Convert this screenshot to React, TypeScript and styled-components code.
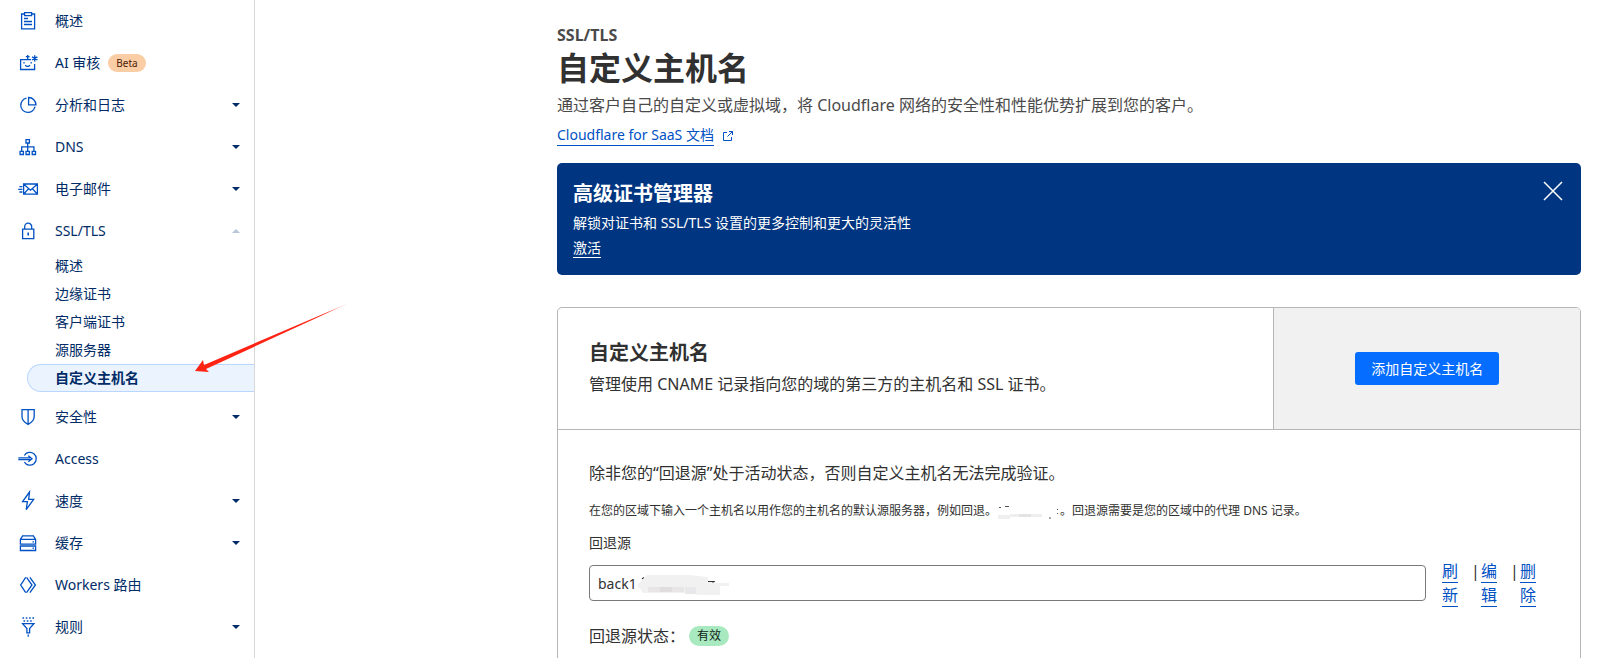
import React from 'react';
import styled, { createGlobalStyle, css } from 'styled-components';

const color = {
  nav: '#002b66',
  link: '#0051c3',
  text: '#313131',
  muted: '#4a4a4a',
  banner: '#003681',
  border: '#b6b6b6',
};

const GlobalStyle = createGlobalStyle`
  *, *::before, *::after { box-sizing: border-box; }
  body {
    margin: 0;
    background: #fff;
    color: ${color.text};
    font-family: "Noto Sans", "Noto Sans CJK SC", sans-serif;
    font-size: 16px;
    line-height: 24px;
  }
  h1, h2, p, ul { margin: 0; padding: 0; }
  ul { list-style: none; }
  button, input { font: inherit; }
`;

const Page = styled.div`
  position: relative;
  display: flex;
  height: 100vh;
  overflow: hidden;
`;

const Sidebar = styled.nav`
  flex: 0 0 255px;
  border-right: 1px solid #d5d7d8;
  font-size: 14px;
  line-height: 20px;
`;

const navRow = css`
  display: flex;
  align-items: center;
  width: 100%;
  height: 42px;
  padding: 0 14px 0 17px;
  border: 0;
  background: none;
  color: ${color.nav};
  text-align: left;
  text-decoration: none;
  cursor: pointer;
`;

const NavLink = styled.a`
  ${navRow}
`;

const NavToggle = styled.button`
  ${navRow}
`;

const NavIcon = styled.svg`
  flex: none;
  width: 22px;
  height: 22px;
  margin-right: 16px;
  fill: none;
  stroke: ${color.link};
  stroke-width: 1.3;
`;

const NavLabel = styled.span`
  flex: 1;
  display: flex;
  align-items: center;
  gap: 8px;
`;

const BetaBadge = styled.span`
  padding: 0 8px;
  border-radius: 9px;
  background: #fbcda5;
  color: #4a1c04;
  font-size: 10px;
  line-height: 18px;
`;

const Caret = styled.span<{ $open?: boolean }>`
  border: 4px solid transparent;
  ${({ $open }) =>
    $open
      ? css`
          border-top-width: 0;
          border-bottom-color: #b9c5d9;
        `
      : css`
          border-bottom-width: 0;
          border-top-color: ${color.nav};
        `}
`;

const SubMenu = styled.ul`
  padding: 0 0 4px 27px;
`;

const SubLink = styled.a<{ $active?: boolean }>`
  display: block;
  padding-left: 27px;
  border: 1px solid transparent;
  border-right: 0;
  border-radius: 14px 0 0 14px;
  color: ${color.nav};
  line-height: 26px;
  text-decoration: none;
  ${({ $active }) =>
    $active &&
    css`
      border-color: #b9d6ff;
      background: #ebf3fe;
      font-weight: 700;
    `}
`;

const Main = styled.main`
  flex: 1;
  min-width: 0;
  padding: 23px 20px 0;
`;

const Content = styled.div`
  max-width: 1024px;
  margin-left: auto;
`;

const Eyebrow = styled.p`
  color: ${color.muted};
  font-weight: 700;
`;

const Title = styled.h1`
  font-size: 32px;
  line-height: 42px;
`;

const Lead = styled.p`
  margin-top: 4px;
  color: ${color.muted};
`;

const DocLine = styled.p`
  display: flex;
  align-items: center;
  gap: 8px;
  margin-top: 8px;
  font-size: 14px;
  line-height: 20px;
`;

const TextLink = styled.a`
  border-bottom: 1px solid currentColor;
  color: ${color.link};
  text-decoration: none;
`;

const LineIcon = styled.svg`
  width: 12px;
  height: 12px;
  fill: none;
  stroke: ${color.link};
`;

const Banner = styled.section`
  display: flex;
  justify-content: space-between;
  align-items: flex-start;
  margin-top: 17px;
  padding: 16px;
  border-radius: 5px;
  background: ${color.banner};
  color: #fff;
  font-size: 14px;
`;

const BannerTitle = styled.h2`
  font-size: 20px;
  line-height: 30px;
`;

const BannerText = styled.p`
  line-height: 28px;
`;

const BannerAction = styled.p`
  line-height: 22px;
`;

const BannerLink = styled(TextLink)`
  color: #fff;
`;

const CloseButton = styled.button`
  display: flex;
  padding: 2px;
  border: 0;
  background: none;
  color: #fff;
  cursor: pointer;
`;

const Card = styled.section`
  margin-top: 32px;
  border: 1px solid ${color.border};
  border-radius: 5px;
  overflow: hidden;
`;

const CardHeader = styled.header`
  display: grid;
  grid-template-columns: 7fr 3fr;
  border-bottom: 1px solid ${color.border};
`;

const CardIntro = styled.div`
  padding: 29px 31px 30px;
`;

const CardTitle = styled.h2`
  font-size: 20px;
  line-height: 32px;
`;

const CardText = styled.p`
  line-height: 30px;
`;

const CardAside = styled.div`
  display: flex;
  align-items: center;
  justify-content: center;
  border-left: 1px solid ${color.border};
  background: #f1f1f1;
`;

const PrimaryButton = styled.button`
  padding: 0 16px;
  border: 0;
  border-radius: 3px;
  background: #056dff;
  color: #fff;
  font-size: 14px;
  line-height: 33px;
  cursor: pointer;
`;

const CardBody = styled.form`
  padding: 31px 32px 32px 31px;
`;

const Hint = styled.p`
  margin-top: 16px;
  font-size: 12px;
  line-height: 20px;
`;

const FieldLabel = styled.label`
  display: block;
  margin: 12px 0;
  font-size: 14px;
  line-height: 20px;
`;

const FieldRow = styled.div`
  display: flex;
  align-items: flex-start;
  gap: 16px;
  height: 36px;
`;

const InputWrap = styled.div`
  position: relative;
  flex: 1;
`;

const TextInput = styled.input`
  width: 100%;
  height: 36px;
  padding: 0 8px;
  border: 1px solid #797979;
  border-radius: 4px;
  background: #fff;
  color: ${color.text};
  font-size: 14px;
`;

const InputSmudge = styled.svg`
  position: absolute;
  left: 47px;
  top: 9px;
  width: 94px;
  height: 22px;
`;

const HintSmudge = styled.svg`
  width: 63px;
  height: 16px;
  vertical-align: middle;
`;

const Actions = styled.ul`
  display: flex;
  flex: 0 0 106px;
  margin-top: -6px;
`;

const Action = styled.li`
  display: flex;
  gap: 2px;

  & + & { padding-left: 13px; }
`;

const Divider = styled.span`
  width: 8px;
  text-align: center;
`;

const ActionText = styled.span`
  width: 16px;
`;

const Status = styled.p`
  display: flex;
  align-items: center;
  gap: 4px;
  margin-top: 23px;
`;

const StatusBadge = styled.span`
  padding: 0 8px;
  border-radius: 10px;
  background: #a9e9bf;
  color: #0f2417;
  font-size: 12px;
  line-height: 20px;
`;

const Pointer = styled.svg`
  position: absolute;
  left: 194px;
  top: 302px;
  width: 158px;
  height: 72px;
  pointer-events: none;
`;

const icons: Record<string, React.ReactNode> = {
  overview: (
    <>
      <path d="M7.500 4H4.600v14.800h13V4h-2.900" />
      <path d="M7.600 2.600h7v3h-7zM7 8.500h4M7 11.500h8M7 14.500h8" />
    </>
  ),
  robot: (
    <>
      <path d="M14 7.600H3.600v9.900h14V12" />
      <path d="M10.700 7.600V3M8.800 4.700h3.800M7 10v1.600M14.200 10v1.600M8.200 13.200c1.300 1.500 3.500 1.500 4.800 0" />
      <path d="M17.700 3.200v6.200M15 4.800l5.400 3M20.400 4.800l-5.400 3" strokeWidth="1.400" />
    </>
  ),
  chart: (
    <>
      <path d="M9.500 4.200a7.200 7.200 0 1 0 8.500 8.500" />
      <path d="M11.600 3.500v7.400H19a7.400 7.400 0 0 0-7.400-7.400z" />
    </>
  ),
  dns: (
    <path d="M9 3.600h3.400v3.400H9zM10.700 7v8.200M4.700 15.200v-4.400h12.200v4.400M3.100 15.300h3.300v3.200H3.100zM9 15.300h3.400v3.200H9zM15.200 15.300h3.300v3.200h-3.300z" />
  ),
  mail: (
    <path d="M6.600 6h13.800v10.200H6.600zM6.600 6l6.900 6.200L20.400 6M6.600 16.200l5-5.600M20.400 16.200l-5-5.600M2.400 8.700h3M1.200 11.300h4.200M2.400 14h3" />
  ),
  lock: (
    <>
      <path d="M5.600 9.200h11.200v9.400H5.600zM7.700 9.200V6.700a3.500 3.500 0 0 1 7 0v2.500" />
      <path d="M11.200 12.500v3" strokeWidth="1.600" />
    </>
  ),
  shield: <path d="M5 3.600h12.200v6.800c0 3.500-2.600 6-6.100 8-3.500-2-6.100-4.500-6.100-8zM11.100 3.600v14.800" />,
  access: (
    <>
      <path d="M7.300 7.500a6.400 6.400 0 1 1 0 6.500" />
      <path d="M1.300 9.900h12M1.300 11.600h12M11.300 7.700l3.700 3-3.700 3" />
    </>
  ),
  bolt: <path d="M12.500 2 5.600 11.700h4.800L9.200 19.600 16.600 9.300h-4.900z" />,
  disks: (
    <>
      <path d="M3.400 7.400 5.600 3.800h10.800l2.200 3.600v4.800H3.400zM3.400 7.400h15.200M3.400 14h15.200v4.500H3.400z" />
      <path d="M15.500 9.800h1.500M15.500 16.200h1.500" />
    </>
  ),
  workers: <path d="M8.700 3.400 3.700 11l5 7.600M9.500 3.400l5.500 7.600-5.500 7.600M12.900 3.400l5.500 7.600-5.500 7.600" />,
  funnel: (
    <>
      <path d="M5.500 2h11.500M6.500 5h10" strokeDasharray="1.600 1.700" strokeWidth="1.500" />
      <path d="M5.600 7.600h11.300l-4.300 5v4.200H9.900v-4.200zM11.200 18.600v2.200" />
    </>
  ),
};

interface NavItem {
  icon: string;
  label: string;
  beta?: boolean;
  toggle?: boolean;
  children?: string[];
}

const navItems: NavItem[] = [
  { icon: 'overview', label: '概述' },
  { icon: 'robot', label: 'AI 审核', beta: true },
  { icon: 'chart', label: '分析和日志', toggle: true },
  { icon: 'dns', label: 'DNS', toggle: true },
  { icon: 'mail', label: '电子邮件', toggle: true },
  {
    icon: 'lock',
    label: 'SSL/TLS',
    toggle: true,
    children: ['概述', '边缘证书', '客户端证书', '源服务器', '自定义主机名'],
  },
  { icon: 'shield', label: '安全性', toggle: true },
  { icon: 'access', label: 'Access' },
  { icon: 'bolt', label: '速度', toggle: true },
  { icon: 'disks', label: '缓存', toggle: true },
  { icon: 'workers', label: 'Workers 路由' },
  { icon: 'funnel', label: '规则', toggle: true },
];

const activeChild = '自定义主机名';

function NavEntry({ item }: { item: NavItem }) {
  const inner = (
    <>
      <NavIcon viewBox="0 0 22 22" aria-hidden="true">
        {icons[item.icon]}
      </NavIcon>
      <NavLabel>
        {item.label}
        {item.beta && <BetaBadge>Beta</BetaBadge>}
      </NavLabel>
      {item.toggle && <Caret $open={!!item.children} />}
    </>
  );
  return (
    <li>
      {item.toggle ? (
        <NavToggle type="button" aria-expanded={!!item.children}>
          {inner}
        </NavToggle>
      ) : (
        <NavLink href="#">{inner}</NavLink>
      )}
      {item.children && (
        <SubMenu>
          {item.children.map((child) => (
            <li key={child}>
              <SubLink href="#" $active={child === activeChild}>
                {child}
              </SubLink>
            </li>
          ))}
        </SubMenu>
      )}
    </li>
  );
}

export default function App() {
  return (
    <Page lang="zh-CN">
      <GlobalStyle />
      <Sidebar>
        <ul>
          {navItems.map((item) => (
            <NavEntry key={item.icon} item={item} />
          ))}
        </ul>
      </Sidebar>
      <Main>
        <Content>
          <Eyebrow>SSL/TLS</Eyebrow>
          <Title>自定义主机名</Title>
          <Lead>通过客户自己的自定义或虚拟域，将 Cloudflare 网络的安全性和性能优势扩展到您的客户。</Lead>
          <DocLine>
            <TextLink href="#">Cloudflare for SaaS 文档</TextLink>
            <LineIcon viewBox="0 0 12 12" aria-hidden="true">
              <path d="M5 2.500H1.500v8h8V7M7 1.500h3.500V5M10.500 1.500 5.500 6.500" />
            </LineIcon>
          </DocLine>
          <Banner>
            <div>
              <BannerTitle>高级证书管理器</BannerTitle>
              <BannerText>解锁对证书和 SSL/TLS 设置的更多控制和更大的灵活性</BannerText>
              <BannerAction>
                <BannerLink href="#">激活</BannerLink>
              </BannerAction>
            </div>
            <CloseButton type="button" aria-label="关闭">
              <svg width="20" height="20" viewBox="0 0 20 20" stroke="currentColor" strokeWidth="1.500">
                <path d="M1 1l18 18M19 1 1 19" />
              </svg>
            </CloseButton>
          </Banner>
          <Card>
            <CardHeader>
              <CardIntro>
                <CardTitle>自定义主机名</CardTitle>
                <CardText>管理使用 CNAME 记录指向您的域的第三方的主机名和 SSL 证书。</CardText>
              </CardIntro>
              <CardAside>
                <PrimaryButton type="button">添加自定义主机名</PrimaryButton>
              </CardAside>
            </CardHeader>
            <CardBody>
              <p>除非您的“回退源”处于活动状态，否则自定义主机名无法完成验证。</p>
              <Hint>
                在您的区域下输入一个主机名以用作您的主机名的默认源服务器，例如回退。
                <HintSmudge viewBox="0 0 63 16" aria-hidden="true">
                  <path d="M1 11h12v-1h32v3H13v2H1z" fill="#efefef" />
                  <path d="M22 10h12v3H22z" fill="#e4e3e3" />
                  <path d="M2 3.500h2M8 2.500h4M52 14h2M60 5.500h1M60 9.500h1" stroke="#555" />
                </HintSmudge>
                。回退源需要是您的区域中的代理 DNS 记录。
              </Hint>
              <FieldLabel htmlFor="fallback-origin">回退源</FieldLabel>
              <FieldRow>
                <InputWrap>
                  <TextInput id="fallback-origin" type="text" defaultValue="back1" />
                  <InputSmudge viewBox="0 0 94 22" aria-hidden="true">
                    <path d="M6 5l2-1.500M72 7.500h6l-2 2" stroke="#333" strokeWidth="1.200" fill="none" />
                    <path
                      d="M1 11 11 1h42l19 2v5l10 1h11v3h-9v9H62l-10-2H7z"
                      fill="#f1f1f2"
                    />
                    <path d="M12 13h12v5H12zM36 13h12v5H36z" fill="#e7e5e5" />
                    <path d="M24 13h12v5H24z" fill="#dfdddd" />
                    <path d="M49 13h11v7H49z" fill="#e8e8ea" />
                  </InputSmudge>
                </InputWrap>
                <Actions>
                  {['刷新', '编辑', '删除'].map((label, i) => (
                    <Action key={label}>
                      {i > 0 && <Divider>|</Divider>}
                      <ActionText>
                        <TextLink href="#">{label}</TextLink>
                      </ActionText>
                    </Action>
                  ))}
                </Actions>
              </FieldRow>
              <Status>
                回退源状态：
                <StatusBadge>有效</StatusBadge>
              </Status>
            </CardBody>
          </Card>
        </Content>
      </Main>
      <Pointer viewBox="0 0 158 72" aria-hidden="true">
        <defs>
          <linearGradient id="tail" x1="0" x2="1" y1="0" y2="0">
            <stop offset="0.850" stopColor="#ff2314" />
            <stop offset="1" stopColor="#ff2314" stopOpacity="0.300" />
          </linearGradient>
        </defs>
        <path d="M1 69 9 58l1 5L155 1 12 67l3 3z" fill="url(#tail)" />
      </Pointer>
    </Page>
  );
}
